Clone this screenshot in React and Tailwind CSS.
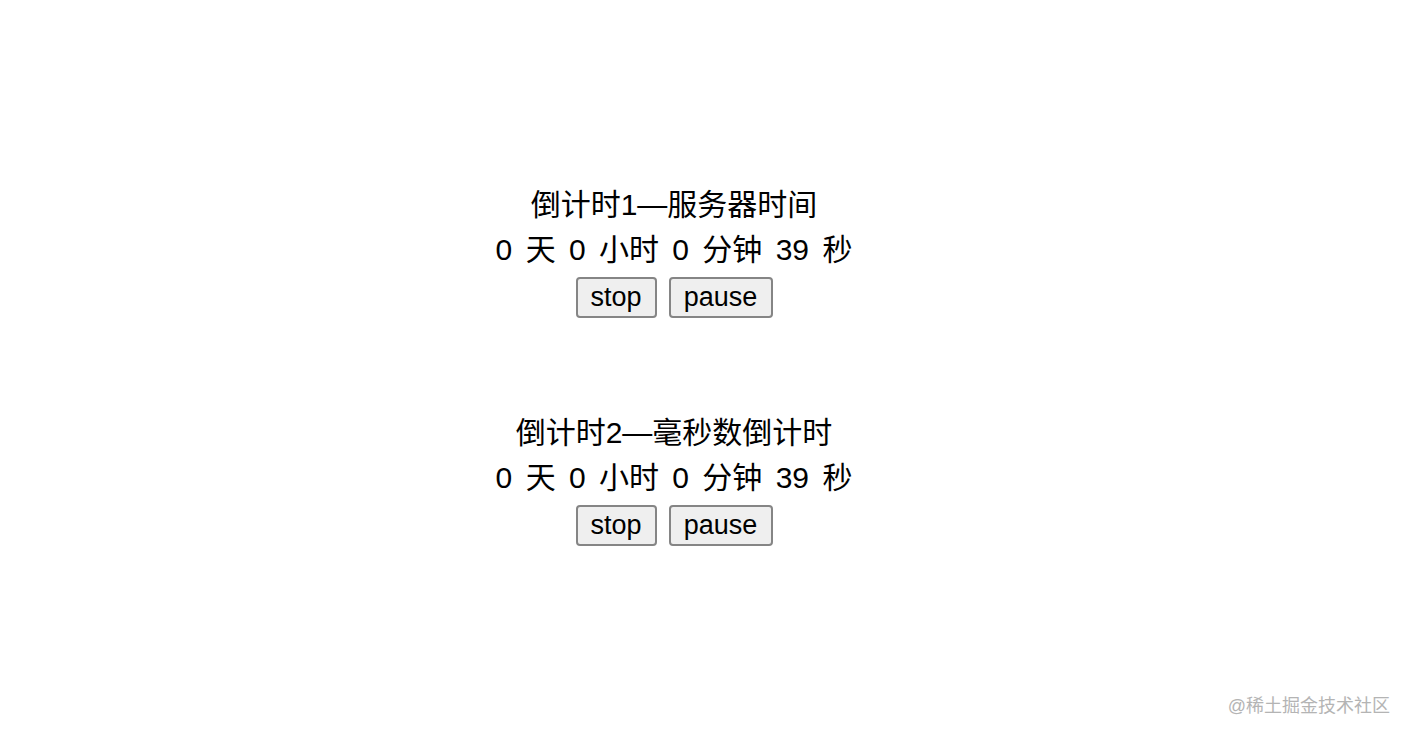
import React from 'react';

const font = { fontFamily: '"Liberation Sans", "Noto Sans CJK SC", sans-serif' };

function Countdown({ title }) {
  return (
    <div className="flex flex-col items-center">
      <div className="text-[30px] leading-[45px] text-black">{title}</div>
      <div className="text-[30px] leading-[45px] text-black [word-spacing:5px]">0 天 0 小时 0 分钟 39 秒</div>
      <div className="mt-[5px] flex gap-[12px]">
        <button className="h-[41px] w-[81px] rounded-[4px] border-2 border-[#858585] bg-[#efefef] text-[27px] leading-none text-black">
          stop
        </button>
        <button className="h-[41px] w-[104px] rounded-[4px] border-2 border-[#858585] bg-[#efefef] text-[27px] leading-none text-black">
          pause
        </button>
      </div>
    </div>
  );
}

export default function App() {
  return (
    <div className="relative h-[740px] w-full bg-white" style={font}>
      <div className="flex flex-col items-center gap-[92px] pt-[182px] pr-[64px]">
        <Countdown title="倒计时1—服务器时间" />
        <Countdown title="倒计时2—毫秒数倒计时" />
      </div>
      <div className="absolute right-[22px] bottom-[20px] text-[18px] text-[#b4b4b4]">@稀土掘金技术社区</div>
    </div>
  );
}
